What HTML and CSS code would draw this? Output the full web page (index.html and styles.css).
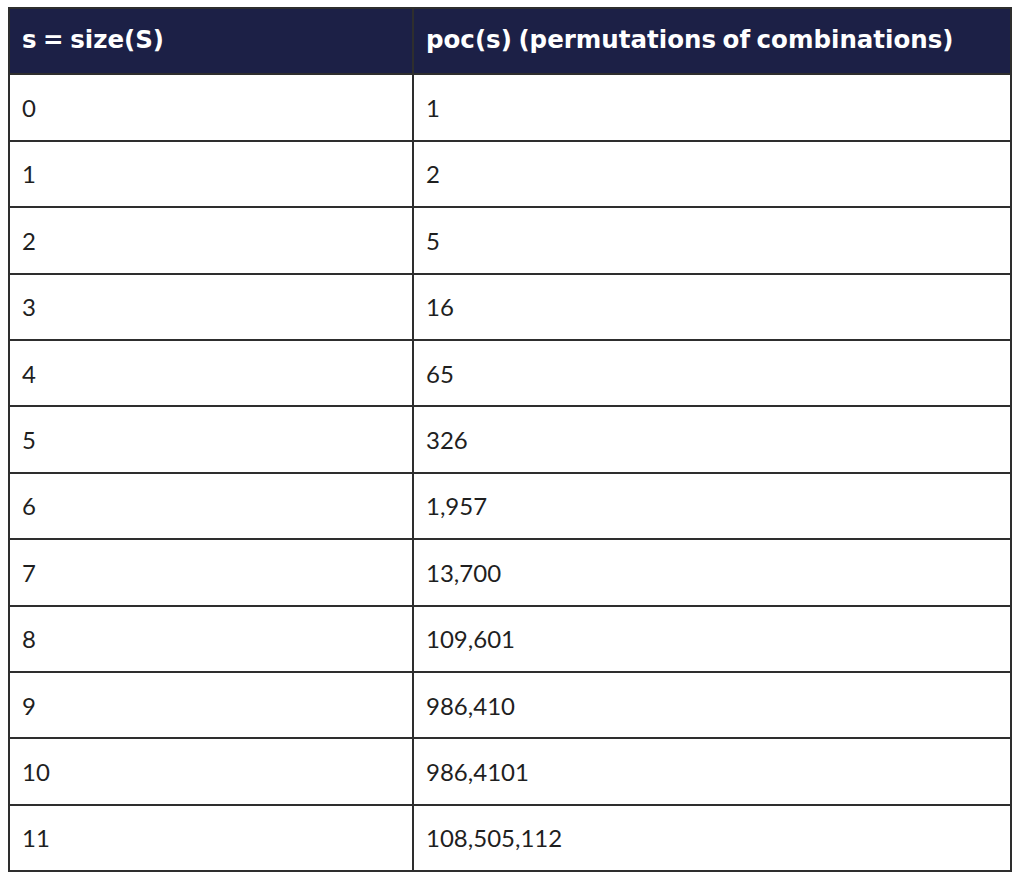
FILE: index.html
```html
<!DOCTYPE html>
<html lang="en">
<head>
<meta charset="utf-8">
<title>poc(s)</title>
<link rel="stylesheet" href="styles.css">
</head>
<body>
<table class="poc-table">
  <colgroup><col class="col-size"><col class="col-poc"></colgroup>
  <thead>
    <tr><th>s = size(S)</th><th>poc(s) (permutations of combinations)</th></tr>
  </thead>
  <tbody>
    <tr><td>0</td><td>1</td></tr>
    <tr><td>1</td><td>2</td></tr>
    <tr><td>2</td><td>5</td></tr>
    <tr><td>3</td><td>16</td></tr>
    <tr><td>4</td><td>65</td></tr>
    <tr><td>5</td><td>326</td></tr>
    <tr><td>6</td><td>1,957</td></tr>
    <tr><td>7</td><td>13,700</td></tr>
    <tr><td>8</td><td>109,601</td></tr>
    <tr><td>9</td><td>986,410</td></tr>
    <tr><td>10</td><td>986,4101</td></tr>
    <tr><td>11</td><td>108,505,112</td></tr>
  </tbody>
</table>
</body>
</html>
```
FILE: styles.css
```css
html, body {
  margin: 0;
  padding: 0;
  background: #ffffff;
}
body {
  padding: 7px 0 0 8px;
  font-family: "Lato", "Noto Sans", sans-serif;
  color: #1f1f1f;
}
.poc-table {
  border-collapse: collapse;
  width: 1004px;
  table-layout: fixed;
}
.col-size { width: 404px; }
.poc-table th,
.poc-table td {
  border: 2px solid #2e2e2e;
  height: 66.4px;
  padding: 0 0 0 12px;
  text-align: left;
  vertical-align: middle;
  box-sizing: border-box;
}
.poc-table th {
  background: #1c2046;
  color: #ffffff;
  font-family: "DejaVu Sans", "Lato", sans-serif;
  font-weight: bold;
  font-size: 24.5px;
  padding-bottom: 3px;
  word-spacing: -2px;
}
.poc-table td {
  font-size: 24px;
}
```
